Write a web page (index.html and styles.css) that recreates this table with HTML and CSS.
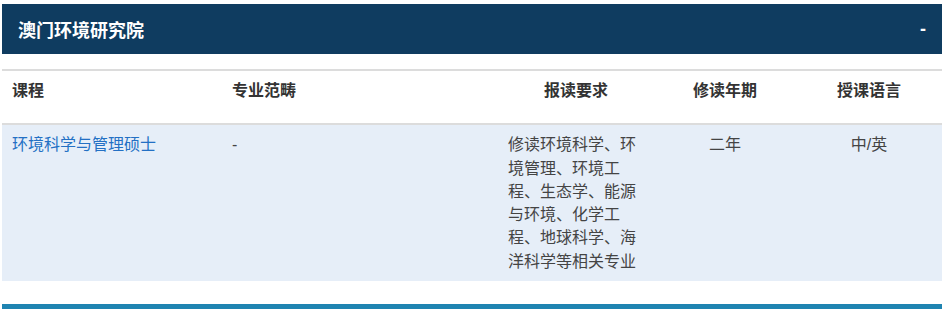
FILE: index.html
```html
<!DOCTYPE html>
<html lang="zh-CN">
<head>
  <meta charset="UTF-8">
  <title>澳门环境研究院 - 课程</title>
  <link rel="stylesheet" href="styles.css">
</head>
<body>
  <div class="wrap">

    <!-- 学院标题栏 -->
    <div class="panel-head">
      <span class="panel-title">澳门环境研究院</span>
      <span class="toggle">-</span>
    </div>

    <!-- 课程列表 -->
    <table class="course-table">
      <colgroup>
        <col class="c-name">
        <col class="c-field">
        <col class="c-req">
        <col class="c-year">
        <col class="c-lang">
      </colgroup>
      <thead>
        <tr>
          <th class="left">课程</th>
          <th class="left">专业范畴</th>
          <th>报读要求</th>
          <th>修读年期</th>
          <th>授课语言</th>
        </tr>
      </thead>
      <tbody>
        <tr>
          <td><a href="#">环境科学与管理硕士</a></td>
          <td>-</td>
          <td class="req">修读环境科学、环境管理、环境工程、生态学、能源与环境、化学工程、地球科学、海洋科学等相关专业</td>
          <td class="center">二年</td>
          <td class="center">中/英</td>
        </tr>
      </tbody>
    </table>

    <div class="next-bar"></div>
  </div>
</body>
</html>
```

FILE: styles.css
```css
body {
  margin: 0;
  padding: 0;
  background: #fff;
  font-family: "Liberation Sans", "Noto Sans CJK SC", sans-serif;
  color: #333;
}

.wrap {
  padding: 4px 4px 0 2px;
}

.panel-head {
  height: 50px;
  background-color: #0f3c60;
  color: #fff;
  padding: 0 16px;
  display: flex;
  align-items: center;
  justify-content: space-between;
  font-size: 18px;
  font-weight: bold;
}

/* Table */
.course-table {
  width: 100%;
  margin-top: 15px;
  border-collapse: collapse;
  table-layout: fixed;
  font-size: 16px;
  line-height: 23.3px;
}

.c-name  { width: 220px; }
.c-field { width: 276px; }
.c-req   { width: 156px; }
.c-year  { width: 142px; }
.c-lang  { width: 146px; }

.course-table thead tr {
  border-top: 2px solid #dcdcdc;
  border-bottom: 2px solid #dcdcdc;
}

.course-table th {
  padding: 8px 10px 21px;
  text-align: center;
  vertical-align: top;
  font-weight: bold;
  color: #333;
}

.course-table th.left {
  text-align: left;
}

.course-table tbody tr {
  background-color: #e6eef8;
}

.course-table td {
  padding: 8px 10px;
  vertical-align: top;
  color: #444;
}

.course-table td.center {
  text-align: center;
}

.course-table a {
  color: #2370c4;
  text-decoration: none;
}

.next-bar {
  margin-top: 23px;
  height: 6px;
  background-color: #1f84b1;
}
```
